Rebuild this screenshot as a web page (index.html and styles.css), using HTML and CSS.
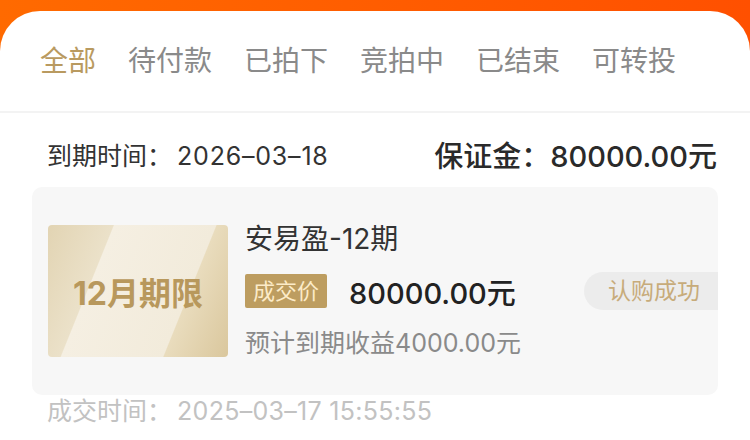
FILE: index.html
```html
<!DOCTYPE html>
<html lang="zh-CN">
<head>
    <meta charset="UTF-8">
    <meta name="viewport" content="width=device-width, initial-scale=1.0">
    <title>我的订单</title>
    <link rel="stylesheet" href="styles.css">
</head>
<body>
    <div class="top-band"></div>

    <div class="panel">
        <!-- Tabs -->
        <nav class="tabs">
            <span class="tab active">全部</span>
            <span class="tab">待付款</span>
            <span class="tab">已拍下</span>
            <span class="tab">竞拍中</span>
            <span class="tab">已结束</span>
            <span class="tab">可转投</span>
        </nav>

        <!-- Order -->
        <section class="order">
            <div class="order-head">
                <span class="due">到期时间：<span class="num">2026–03–18</span></span>
                <span class="deposit">保证金：80000.00元</span>
            </div>

            <div class="card">
                <div class="cover">12月期限</div>
                <div class="info">
                    <h2 class="title">安易盈-12期</h2>
                    <div class="price-row">
                        <span class="tag">成交价</span>
                        <span class="price">80000.00元</span>
                        <span class="status">认购成功</span>
                    </div>
                    <p class="income">预计到期收益4000.00元</p>
                </div>
            </div>

            <p class="deal-time">成交时间：<span class="num">2025–03–17 15:55:55</span></p>
        </section>
    </div>
</body>
</html>
```

FILE: styles.css
```css
/* General */
body {
    margin: 0;
    font-family: Inter, "Noto Sans CJK SC", sans-serif;
    background: linear-gradient(to right, #ff6a00, #ff5000);
    color: #333;
    height: 440px;
    overflow: hidden;
}

.top-band {
    height: 11px;
}

.panel {
    background: #fff;
    border-radius: 40px 40px 0 0;
    height: 429px;
}

/* Tabs */
.tabs {
    display: flex;
    align-items: center;
    gap: 32px;
    height: 100px;
    padding: 0 40px;
    border-bottom: 2px solid #f3f3f3;
}

.tab {
    font-size: 28px;
    line-height: 40px;
    color: #8a8a8a;
}

.tab.active {
    color: #b99a60;
}

/* Order */
.order {
    padding: 0 32px;
}

.order-head {
    display: flex;
    justify-content: space-between;
    align-items: center;
    padding: 21px 1px 0 15px;
    height: 40px;
    margin-bottom: 13px;
}

.num {
    margin-left: 5px;
    letter-spacing: 0.8px;
}

.due {
    font-size: 25px;
    color: #333;
}

.deposit {
    font-size: 29px;
    font-weight: 500;
    color: #2a2a2a;
}

/* Card */
.card {
    display: flex;
    align-items: center;
    gap: 17px;
    background: #f7f7f7;
    border-radius: 10px;
    padding: 36px 0 36px 16px;
    overflow: hidden;
}

.cover {
    width: 180px;
    height: 132px;
    flex-shrink: 0;
    border-radius: 4px;
    display: flex;
    justify-content: center;
    align-items: center;
    font-size: 32px;
    font-weight: bold;
    color: #b8985c;
    background: linear-gradient(112deg, #e2d4b3 0%, #ebe1c9 28%, #f5efe2 28.5%, #f2ebdb 72%, #e9dcbd 72.5%, #dac79d 100%);
}

.info {
    flex: 1;
}

.title {
    margin: 0;
    font-size: 28px;
    font-weight: normal;
    line-height: 32px;
    color: #333;
}

.price-row {
    display: flex;
    align-items: center;
    height: 38px;
    margin-top: 17px;
}

.tag {
    height: 34px;
    line-height: 34px;
    padding: 0 8px;
    border-radius: 2px;
    background: #bd9d60;
    color: #fcebc8;
    font-size: 22px;
}

.price {
    margin-left: 22px;
    font-size: 29px;
    font-weight: 500;
    color: #222;
}

.status {
    margin-left: auto;
    height: 38px;
    line-height: 38px;
    padding: 0 18px 0 24px;
    border-radius: 19px 0 0 19px;
    background: #ececec;
    color: #c7ab7a;
    font-size: 23px;
}

.income {
    margin: 17px 0 0;
    font-size: 25px;
    line-height: 32px;
    color: #8a8a8a;
}

.deal-time {
    margin: 1px 0 0 15px;
    font-size: 25px;
    line-height: 30px;
    color: #c2c2c2;
}

.deal-time .num {
    letter-spacing: 0.3px;
}
```
